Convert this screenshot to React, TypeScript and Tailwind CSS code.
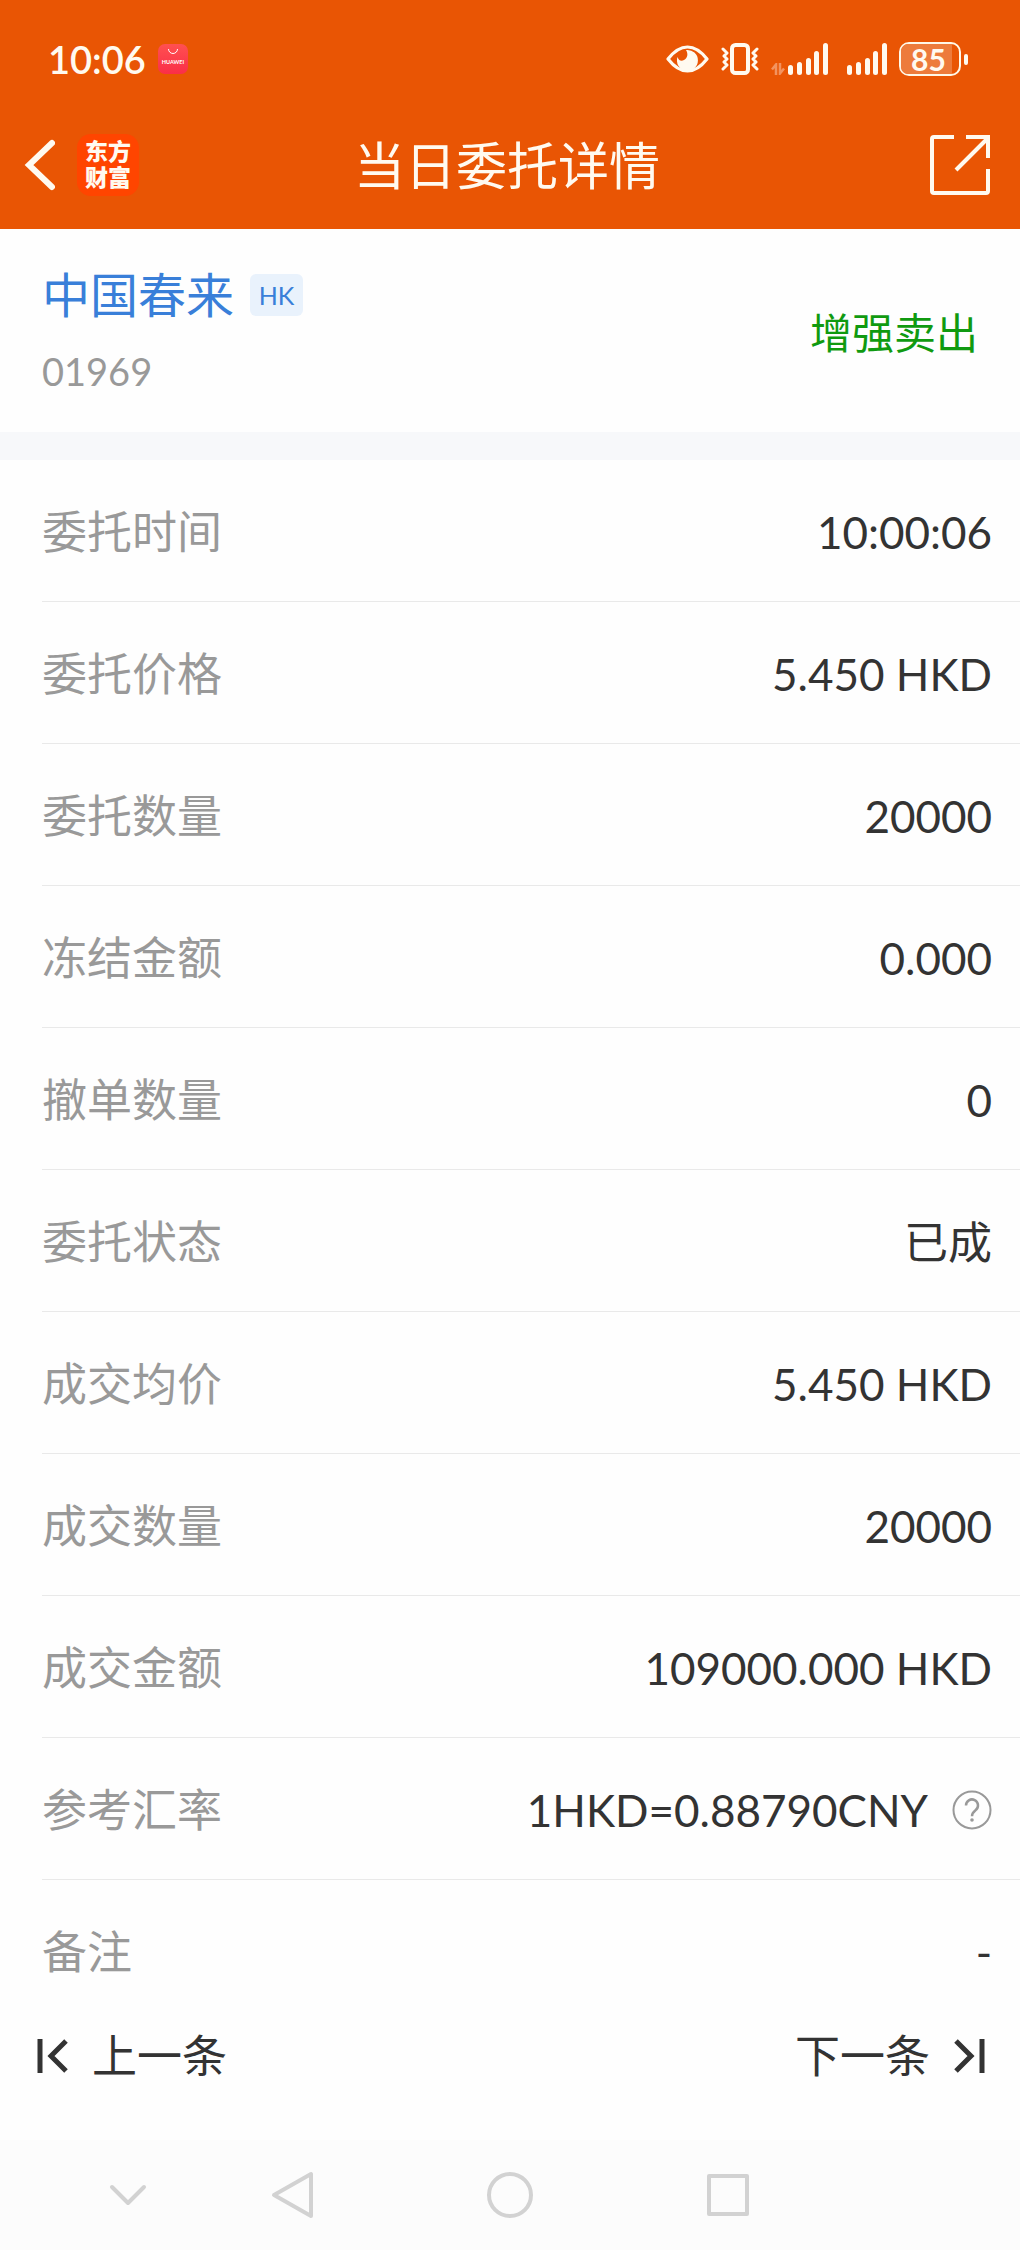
import { ReactNode } from 'react';

type Row = { label: string; value: string; help?: boolean };

const rows: Row[] = [
  { label: '委托时间', value: '10:00:06' },
  { label: '委托价格', value: '5.450 HKD' },
  { label: '委托数量', value: '20000' },
  { label: '冻结金额', value: '0.000' },
  { label: '撤单数量', value: '0' },
  { label: '委托状态', value: '已成' },
  { label: '成交均价', value: '5.450 HKD' },
  { label: '成交数量', value: '20000' },
  { label: '成交金额', value: '109000.000 HKD' },
  { label: '参考汇率', value: '1HKD=0.88790CNY', help: true },
  { label: '备注', value: '-' },
];

function SignalBars() {
  return (
    <svg className="w-[41px] h-8" viewBox="0 0 41 32" fill="currentColor">
      <rect x="0" y="22" width="5" height="10" rx="2.5" />
      <rect x="9" y="19" width="5" height="13" rx="2.5" />
      <rect x="18" y="15" width="5" height="17" rx="2.5" />
      <rect x="26" y="8" width="5" height="24" rx="2.5" />
      <rect x="35" y="0" width="5" height="32" rx="2.5" />
    </svg>
  );
}

function StatusBar() {
  return (
    <div className="flex items-center justify-between h-[118px] pl-12 pr-[52px]">
      <div className="flex items-center gap-3">
        <span className="text-[38px] leading-[48px] font-semibold">10:06</span>
        {/* app gallery notification */}
        <svg className="w-[30px] h-[30px]" viewBox="0 0 30 30">
          <defs>
            <linearGradient id="gallery" x1="0" y1="0" x2="0" y2="1">
              <stop offset="0" stopColor="#ff5050" />
              <stop offset="1" stopColor="#fa2e48" />
            </linearGradient>
          </defs>
          <rect width="30" height="30" rx="7" fill="url(#gallery)" />
          <path d="M10.5 5 a4.5 4.5 0 0 0 9 0" fill="none" stroke="#fff" strokeWidth="1" />
          <text x="15" y="19.5" textAnchor="middle" fontSize="5.5" fontWeight="700" fill="#fff">
            HUAWEI
          </text>
        </svg>
      </div>

      <div className="flex items-center">
        <svg className="w-[43px] h-7" viewBox="0 0 43 28">
          <path d="M2 14 C9 5 15 2 21.5 2 S34 5 41 14 C34 23 28 26 21.5 26 S9 23 2 14Z" fill="none" stroke="currentColor" strokeWidth="3.2" strokeLinejoin="round" />
          <path d="M20 5 A10.5 10.5 0 1 1 11.5 12 C13 16 15.500 16.500 18 15 C21.500 13 22.500 9 20 5Z" fill="currentColor" />
        </svg>
        <svg className="ml-3 w-[38px] h-8" viewBox="0 0 38 32" fill="none" stroke="currentColor" strokeLinejoin="round" strokeLinecap="round">
          <rect x="11" y="2" width="16" height="28" rx="3.5" strokeWidth="4" />
          <path d="M2 6 l4 4 -3 3 3 3 -3 3 3 3 -4 4 M36 6 l-4 4 3 3 -3 3 3 3 -3 3 4 4" strokeWidth="3" />
        </svg>
        <svg className="ml-3 mt-5 w-[14px] h-3" viewBox="0 0 14 12" fill="none" stroke="#f3935f" strokeWidth="2.5">
          <path d="M5 12 V1.5 L1 6.5 M9 0 V10.5 L13 5.5" />
        </svg>
        <div className="ml-[3px]"><SignalBars /></div>
        <div className="ml-[18px]"><SignalBars /></div>
        <div className="flex items-center ml-[11px]">
          <div className="flex w-[62px] h-[34px] rounded-[10px] border-2 border-[#fff8e8]">
            <div className="w-[51px] h-[30px] rounded-l-[7px] bg-[#ed7b3b] text-[30px] leading-[30px] font-bold text-center pl-1">85</div>
          </div>
          <div className="ml-[3px] w-1 h-[11px] rounded-sm bg-current" />
        </div>
      </div>
    </div>
  );
}

function TitleBar() {
  return (
    <div className="grid grid-cols-[1fr_auto_1fr] items-center h-[111px] pb-[17px] pl-6 pr-[30px]">
      <div className="flex items-center gap-[22px]">
        <button type="button" aria-label="返回">
          <svg className="w-[31px] h-[52px]" viewBox="0 0 31 52" fill="none" stroke="currentColor" strokeWidth="6" strokeLinecap="round" strokeLinejoin="miter">
            <path d="M28 4 L5 26 L28 48" />
          </svg>
        </button>
        <a href="#home" className="flex flex-col items-center justify-center w-[62px] h-[62px] rounded-[14px] bg-[#ff4500] text-[23px] leading-[26px] font-black pb-0.5">
          <span>东方</span>
          <span>财富</span>
        </a>
      </div>
      <h1 className="pt-0.5 text-[51px] leading-[60px]">当日委托详情</h1>
      <button type="button" aria-label="分享" className="justify-self-end">
        <svg className="w-[60px] h-[60px]" viewBox="0 0 60 60" fill="none" stroke="currentColor" strokeWidth="4" strokeLinejoin="round">
          <path d="M24 2 H4 Q2 2 2 4 V56 Q2 58 4 58 H56 Q58 58 58 56 V34" />
          <path d="M36 2 H58 V23" strokeLinejoin="miter" />
          <path d="M57 4 L26 35" />
        </svg>
      </button>
    </div>
  );
}

function DetailRow({ row, last }: { row: Row; last: boolean }) {
  return (
    <div className="pl-[42px]">
      <div className={`flex items-center justify-between h-[142px] pt-0.5 pr-7 ${last ? '' : 'border-b border-[#e9e9e9]'}`}>
        <dt className="text-[45px] leading-[60px] text-[#999999]">{row.label}</dt>
        <dd className="flex items-center text-[44px] leading-[60px] text-[#333333]">
          {row.value}
          {row.help && (
            <button type="button" aria-label="汇率说明" className="ml-6">
              <svg className="w-10 h-10" viewBox="0 0 40 40" fill="none" stroke="#999999">
                <circle cx="20" cy="20" r="18.5" strokeWidth="2" />
                <path d="M14 15.5 a6 6 0 1 1 9.5 4.8 c-2.5 2 -3.5 3 -3.5 6" strokeWidth="2.5" />
                <circle cx="20" cy="30" r="1.8" fill="#999999" stroke="none" />
              </svg>
            </button>
          )}
        </dd>
      </div>
    </div>
  );
}

function NavButton({ label, children }: { label: string; children: ReactNode }) {
  return (
    <button type="button" aria-label={label} className="flex justify-center">
      <svg className="w-12 h-12" viewBox="0 0 48 48" fill="none" stroke="#d2d2d2" strokeWidth="4" strokeLinecap="round" strokeLinejoin="round">
        {children}
      </svg>
    </button>
  );
}

export default function App() {
  return (
    <div className="flex flex-col min-h-screen bg-[#fefefe] font-[Lato,'Noto_Sans_CJK_SC',sans-serif]">
      <header className="bg-[#e95504] text-[#fffaf0]">
        <StatusBar />
        <TitleBar />
      </header>

      <section className="flex items-center justify-between h-[203px] pt-1 pl-[42px] pr-[42px]">
        <div className="flex flex-col gap-4">
          <div className="flex items-center gap-4">
            <h2 className="text-[48px] leading-[60px] text-[#397fd9]">中国春来</h2>
            <span className="w-[53px] h-[42px] rounded-md bg-[#e9f2fc] text-[25px] leading-[42px] text-center text-[#397fd9]">HK</span>
          </div>
          <span className="text-[38px] leading-[60px] text-[#999999]">01969</span>
        </div>
        <span className="text-[42px] leading-[60px] text-[#109a10]">增强卖出</span>
      </section>

      <div className="h-7 bg-[#f7f8fa]" />

      <dl>
        {rows.map((row, i) => (
          <DetailRow key={row.label} row={row} last={i === rows.length - 1} />
        ))}
      </dl>

      <div className="flex justify-between pt-1 pl-9 pr-[34px] text-[45px] leading-[60px] text-[#333333]">
        <button type="button" className="flex items-center gap-6">
          <svg className="w-8 h-9" viewBox="0 0 32 36" fill="none" stroke="currentColor" strokeWidth="5">
            <path d="M4 1 V35 M30 3 L15 18 L30 33" />
          </svg>
          上一条
        </button>
        <button type="button" className="flex items-center gap-6">
          下一条
          <svg className="w-8 h-9" viewBox="0 0 32 36" fill="none" stroke="currentColor" strokeWidth="5">
            <path d="M28 1 V35 M2 3 L17 18 L2 33" />
          </svg>
        </button>
      </div>

      <nav className="mt-auto grid grid-cols-[256fr_74fr_360fr_75fr_255fr] items-center h-[110px] bg-[#fcfcfc]">
        <NavButton label="收起"><path d="M8 16 L24 32 L40 16" /></NavButton>
        <NavButton label="返回"><path d="M42 3 V45 L5 24 Z" /></NavButton>
        <NavButton label="主页"><circle cx="24" cy="24" r="21" /></NavButton>
        <NavButton label="最近"><rect x="5" y="5" width="38" height="38" /></NavButton>
      </nav>
    </div>
  );
}
